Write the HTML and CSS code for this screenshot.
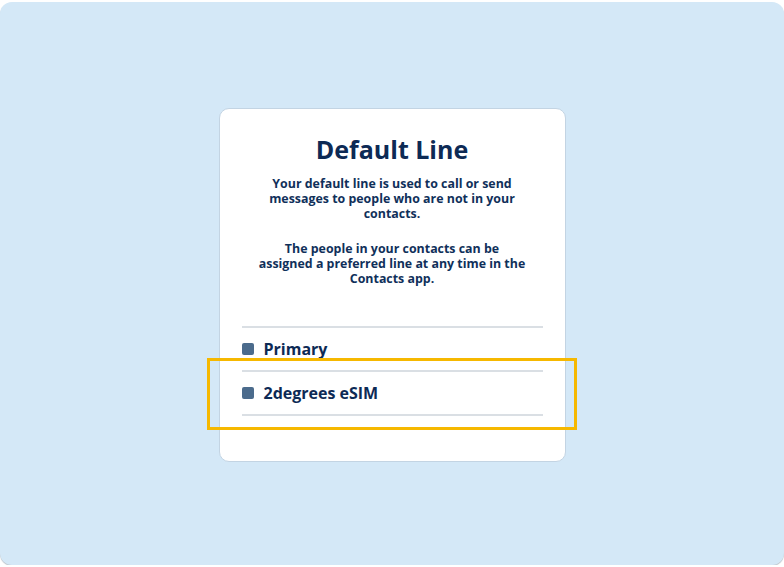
FILE: index.html
```html
<!DOCTYPE html>
<html lang="en">
<head>
    <meta charset="UTF-8">
    <meta name="viewport" content="width=device-width, initial-scale=1.0">
    <title>Default Line</title>
    <link rel="stylesheet" href="styles.css">
</head>
<body>

    <div class="screen">
        <div class="card">
            <h2 class="title">Default Line</h2>
            <p class="info">Your default line is used to call or send messages to people who are not in your contacts.</p>
            <p class="info">The people in your contacts can be assigned a preferred line at any time in the Contacts app.</p>

            <ul class="lines">
                <li><span class="dot"></span>Primary</li>
                <li><span class="dot"></span>2degrees eSIM</li>
            </ul>

            <div class="highlight"></div>
        </div>
    </div>

</body>
</html>
```

FILE: styles.css
```css
body {
    margin: 0;
    background-color: white;
    font-family: "Open Sans", "Liberation Sans", sans-serif;
}
.screen {
    margin-top: 2px;
    height: 563px;
    border-radius: 12px;
    background-color: #d4e8f7;
    box-shadow: 0 1px 1px #b9c2c9;
    display: flex;
    justify-content: center;
    padding-top: 106px;
    box-sizing: border-box;
}
.card {
    position: relative;
    width: 347px;
    height: 354px;
    box-sizing: border-box;
    background-color: white;
    border: 1px solid #c3d4e3;
    border-radius: 10px;
    padding: 23px 22px 0 22px;
    color: #10305a;
    text-align: center;
}
.title {
    margin: 0;
    font-size: 25px;
    font-weight: 700;
    line-height: 34px;
    color: #0d2a55;
}
.info {
    margin: 10px auto 0 auto;
    width: 268px;
    font-size: 12.4px;
    font-weight: 700;
    line-height: 15px;
}
.info + .info {
    margin-top: 20px;
}
.lines {
    list-style: none;
    margin: 40px 0 0 0;
    padding: 0;
    border-top: 2px solid #dadfe4;
    text-align: left;
}
.lines li {
    display: flex;
    align-items: center;
    gap: 10px;
    height: 42px;
    border-bottom: 2px solid #dadfe4;
    font-size: 16px;
    font-weight: 700;
    color: #0d2a55;
}
.dot {
    width: 12px;
    height: 12px;
    border-radius: 2px;
    background-color: #4b6b8c;
}
.highlight {
    position: absolute;
    left: -13px;
    top: 249px;
    width: 370px;
    height: 72px;
    box-sizing: border-box;
    border: 3px solid #f6b800;
}
```
